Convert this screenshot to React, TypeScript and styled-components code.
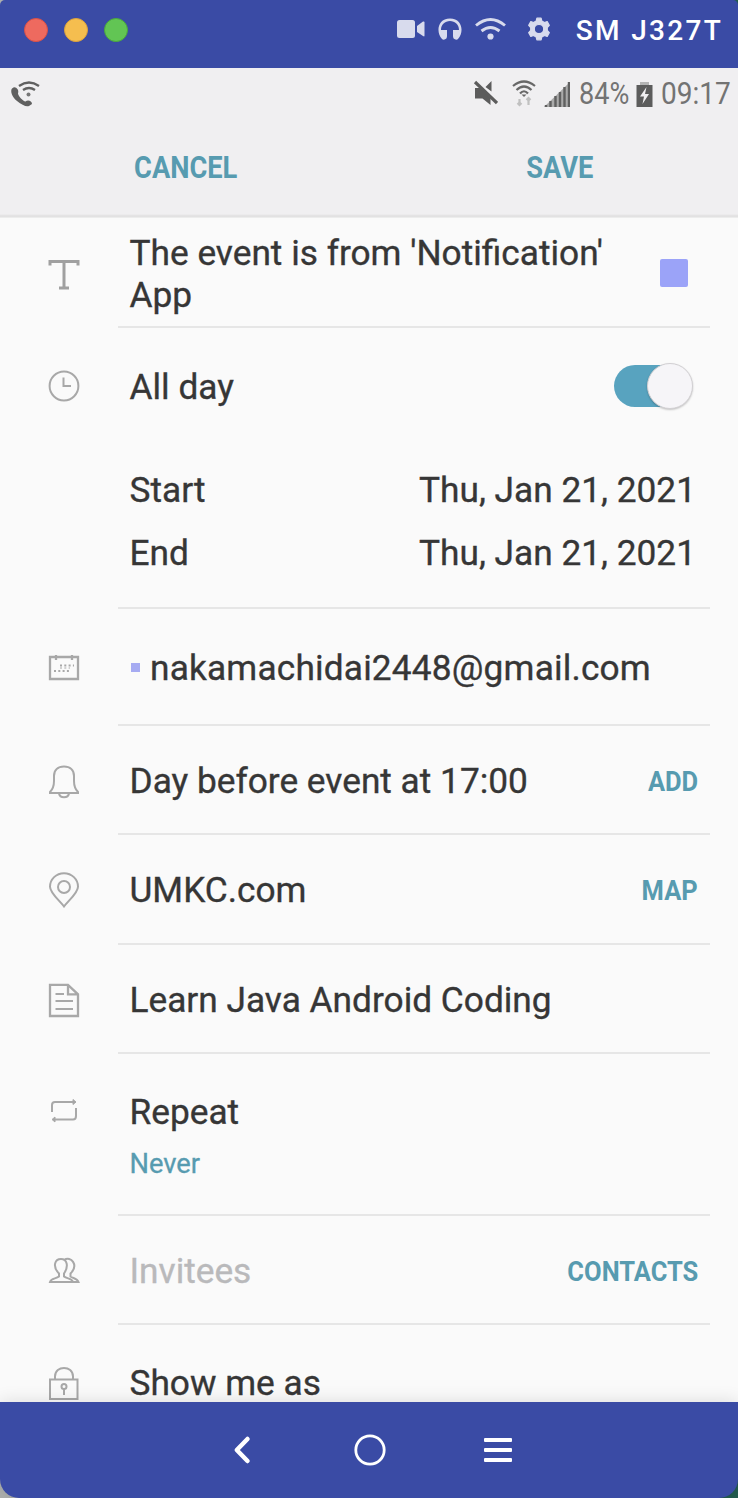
import React from "react";
import styled, { createGlobalStyle } from "styled-components";

const GlobalStyle = createGlobalStyle`
  *, *::before, *::after { box-sizing: border-box; }
  body { margin: 0; background: #a9aaa9; font-family: Roboto, "Liberation Sans", sans-serif; }
`;

const accent = "#579bb0";

const Frame = styled.div`
  width: 738px;
  height: 1498px;
  display: flex;
  flex-direction: column;
  overflow: hidden;
  background: linear-gradient(90deg, #aeb0ae 50%, #235c50 50%);
`;

const TitleBar = styled.header`
  height: 68px;
  flex: none;
  display: flex;
  align-items: center;
  padding: 0 15px 8px 24px;
  background: #3a4ba5;
  border-radius: 5px 5px 0 0;
`;

const Lights = styled.div`
  display: flex;
  gap: 16px;
  margin-right: auto;
`;

const Light = styled.span<{ $fill: string; $edge: string }>`
  width: 24px;
  height: 24px;
  border-radius: 50%;
  background: ${(p) => p.$fill};
  border: 1px solid ${(p) => p.$edge};
`;

const DeviceTools = styled.div`
  display: flex;
  align-items: center;
  margin-top: -2px;
  color: #d8dbed;
  svg { display: block; }
`;

const DeviceName = styled.span`
  font-size: 28px;
  font-weight: 500;
  line-height: 34px;
  letter-spacing: 2.3px;
  color: #fff;
  white-space: nowrap;
  margin: 2px 0 0 25px;
`;

const Screen = styled.main`
  flex: 1;
  min-height: 0;
  overflow: hidden;
  background: #fafafa;
`;

const StatusBar = styled.div`
  height: 51px;
  display: flex;
  align-items: center;
  padding: 0 7px 0 10px;
  background: #f0eff1;
  color: #666;
  svg { display: block; flex: none; }
`;

const StatusText = styled.span<{ $width: number; $scale: number }>`
  width: ${(p) => p.$width}px;
  margin-top: 1px;
  font-size: 31.5px;
  line-height: 36px;
  white-space: nowrap;
  color: #737373;
  transform: scaleX(${(p) => p.$scale});
  transform-origin: left center;
`;

const StatusRight = styled.div`
  display: flex;
  align-items: center;
  margin-left: auto;
`;

const ActionBar = styled.div`
  height: 99px;
  display: grid;
  grid-template-columns: 1fr 1fr;
  justify-items: center;
  padding: 31px 0 0 2px;
  background: linear-gradient(#f0eff1 95px, #e0dfe0 97px, #e4e4e4 98px, #f4f4f4 99px);
`;

const Action = styled.button<{ $small?: boolean; $shift?: number }>`
  border: 0;
  padding: 0;
  background: none;
  font: 700 ${(p) => (p.$small ? 28.5 : 31.5)}px/36px Roboto, sans-serif;
  height: 36px;
  color: ${accent};
  white-space: nowrap;
  transform: scaleX(${(p) => (p.$small ? 0.895 : 0.865)});
  transform-origin: ${(p) => (p.$small ? "right" : "center")} center;
  margin-left: ${(p) => p.$shift ?? 0}px;
  margin-top: ${(p) => (p.$small ? 4 : 0)}px;
`;

const Row = styled.section<{ $height: number }>`
  height: ${(p) => p.$height}px;
  display: grid;
  grid-template-columns: 118px 592px;
`;

const IconCell = styled.div<{ $top: number }>`
  padding: ${(p) => p.$top}px 0 0 46px;
  svg { display: block; }
`;

const Body = styled.div<{ $top: number }>`
  padding: ${(p) => p.$top}px 12px 0 11.5px;
  border-bottom: 2px solid #e6e6e6;
`;

const Line = styled.div`
  display: flex;
  justify-content: space-between;
  line-height: 42px;
  height: 42px;
`;

const Text = styled.span<{ $tone?: string; $track?: number }>`
  font-size: 35.25px;
  line-height: 42px;
  letter-spacing: ${(p) => p.$track ?? 0}px;
  white-space: nowrap;
  color: ${(p) => p.$tone ?? "#363636"};
  -webkit-text-stroke: 0.35px ${(p) => p.$tone ?? "#363636"};
`;

const Title = styled(Text)`
  white-space: pre-line;
`;

const Dates = styled.div`
  display: grid;
  gap: 21px;
  padding: 61px 2px 0 0;
`;

const SubText = styled.div`
  margin-top: 15px;
  font-size: 27.3px;
  line-height: 32px;
  color: ${accent};
  -webkit-text-stroke: 0.3px ${accent};
`;

const Swatch = styled.span`
  width: 28px;
  height: 28px;
  margin: 27px 10px 0 0;
  border-radius: 2px;
  background: #9ba3f8;
`;

const Account = styled.div`
  display: flex;
  align-items: center;
  gap: 10.5px;
  &::before {
    content: "";
    width: 9px;
    height: 9px;
    margin: -2px 0 0 1px;
    background: #a6abf2;
  }
`;

const Toggle = styled.span`
  width: 76px;
  height: 42px;
  margin: -1px 8px 0 0;
  display: flex;
  align-items: center;
  justify-content: flex-end;
  border-radius: 21px;
  background: #58a3bf;
`;

const Thumb = styled.span`
  width: 46px;
  height: 46px;
  flex: none;
  margin-right: -3px;
  border-radius: 50%;
  background: #f6f5f8;
  border: 1px solid #d2d0d3;
  box-shadow: 0 1px 2px rgba(0, 0, 0, 0.22);
`;

const NavBar = styled.nav`
  position: relative;
  height: 96px;
  flex: none;
  display: flex;
  justify-content: center;
  align-items: center;
  gap: 88px;
  background: #3a4ba5;
  border-radius: 0 0 19px 19px;
  box-shadow: 0 0 18px rgba(0, 0, 0, 0.13);
  svg { display: block; }
`;

const Outline = ({ children }: { children: React.ReactNode }) => (
  <svg width="36" height="36" viewBox="0 0 36 36" fill="none" stroke="#a8a8a8" strokeWidth="2">
    {children}
  </svg>
);

const icons = {
  title: (
    <path d="M4 8.5V4.500H32V8.5M18 4.500V31M13 31H23" strokeWidth="3" stroke="#a0a0a0" />
  ),
  clock: (
    <>
      <circle cx="18" cy="18" r="14.4" />
      <path d="M17.5 9.5V18H25" />
    </>
  ),
  calendar: (
    <>
      <path d="M4 7H32V29H4ZM10 5V10M26 5V10" strokeWidth="2.300" />
      <path d="M14 15.500H28M8 21H24" strokeDasharray="2 2.3" />
      <path d="M14 18H24" strokeDasharray="2 2.3" strokeWidth="1" />
    </>
  ),
  bell: (
    <path d="M4 28C7 25 8 21 8 17V12C8 6 12 2.5 18 2.5S28 6 28 12V17C28 21 29 25 32 28V29H4ZM13 29.5C14 34.5 22 34.5 23 29.5" />
  ),
  pin: (
    <>
      <path d="M18 34.5C14 29 4 21 4 14.7A14 13.5 0 0 1 32 14.7C32 21 22 29 18 34.5Z" />
      <circle cx="18" cy="15" r="6" />
    </>
  ),
  note: (
    <>
      <path d="M4 2.8H22L32 12.3V34H4ZM22 3V12.3H32" strokeWidth="2.300" />
      <path d="M9.5 12H18M9.5 19H27M9.5 27H27" />
    </>
  ),
  repeat: (
    <>
      <path d="M6 18V11Q6 8 9 8H27M30 14V22Q30 25.5 27 25.5H9" />
      <path d="M27 5.500L30 8L27 10.500ZM9 23L6 25.5L9 28Z" fill="#a5a5a5" strokeWidth="1" />
    </>
  ),
  people: (
    <>
      <path d="M4 29C5 25 10 26 13 23.5V20.5C6 13 9 6 15 6S23 13 18 20.5V23.5C21 26 26 25 27 29Z" />
      <path d="M18 7C25 2.5 33 12 24.5 20.5V23.5C27 25.5 31 25 32.5 29H27" />
    </>
  ),
  lock: (
    <>
      <path d="M4 14.5H31.5V34H4ZM9 14.5V11.5C9 0 27 0 27 11.5V14.5" />
      <circle cx="18" cy="21.5" r="2.5" />
      <path d="M18 24V30" />
    </>
  ),
};

type IconName = keyof typeof icons;

const Field = (p: {
  icon: IconName;
  height: number;
  iconTop: number;
  textTop: number;
  children: React.ReactNode;
}) => (
  <Row $height={p.height}>
    <IconCell $top={p.iconTop}>
      <Outline>{icons[p.icon]}</Outline>
    </IconCell>
    <Body $top={p.textTop}>{p.children}</Body>
  </Row>
);

const PhoneWifi = () => (
  <svg width="30" height="28" viewBox="0 0 30 28" fill="none" stroke="#606060" strokeWidth="2.3">
    <path
      d="M2 8.500C0 11 2 17 7 21S16 27 19 26L22 24C22 21 18 19.500 15.500 21.500C13 21 8.500 16.500 8 13.500C9.500 10 6 6.500 3.500 7.500Z"
      fill="#606060"
      stroke="none"
    />
    <path d="M9 6Q19 -1 29 6M13 10Q19 6 25 10" />
    <circle cx="18.500" cy="14.500" r="2" fill="#777" stroke="none" />
  </svg>
);

const Muted = () => (
  <svg width="25" height="27" viewBox="0 0 25 27" fill="#5c5c5c">
    <path d="M2 8H7L17.500 18V25L9.500 18.500H2ZM12.500 7L18.500 1V11.500Z" />
    <path d="M2 2L24 23" stroke="#5c5c5c" strokeWidth="3.200" />
  </svg>
);

const StatusWifi = () => (
  <svg width="24" height="27" viewBox="0 0 24 27" fill="none" stroke="#686868" strokeWidth="2.200">
    <path d="M1 6Q12 -3 23 6M4.500 10Q12 3 19.500 10M8 13.500Q12 9 16 13.500" />
    <path d="M9.500 14.500H14.500L12 17Z" fill="#686868" stroke="none" />
    <path d="M7.500 25V19M5.500 23L7.500 25L9.500 23M16.500 18V25M14.500 20L16.500 18L18.500 20" stroke="#c0c0c0" />
  </svg>
);

const Signal = () => (
  <svg width="26" height="26" viewBox="0 0 26 26">
    <path d="M0 26L26 1V26Z" fill="#aaa" />
    <path d="M2 26V24M6.500 26V20M11.500 26V15M16 26V11M20.500 26V6M25 26V1" stroke="#606060" strokeWidth="2.400" />
  </svg>
);

const Battery = () => (
  <svg width="17" height="26" viewBox="0 0 17 26">
    <path d="M4 1H13V5H4Z" fill="#b4b4b4" />
    <path d="M0.500 4H16.500V26H0.500Z" fill="#5c5c5c" />
    <path d="M10.500 6L4 15.500H8L6.500 23L13 13H9Z" fill="#f0eff1" />
  </svg>
);

const Camera = () => (
  <svg width="28" height="20" viewBox="0 0 28 20" fill="currentColor">
    <rect x="0" y="1" width="18" height="18" rx="2.500" />
    <path d="M20 7L26 2.500Q27.500 2 27.500 3.500V16.500Q27.500 18 26 17L20 13Z" />
  </svg>
);

const Headphones = () => (
  <svg width="24" height="22" viewBox="0 0 24 22" fill="currentColor">
    <path d="M4 21C-2 15 -1 0.500 12 0.500S26 15 20 21Q19 22 17.500 21.500Q15 21 15 18V12H21C21 6.500 17 3 12 3S3 6.500 3 12H9V18Q9 21 6.500 21.500Q5 22 4 21Z" />
  </svg>
);

const Wifi = () => (
  <svg width="31" height="22" viewBox="0 0 31 22" fill="none" stroke="currentColor" strokeWidth="2.900">
    <path d="M1 7.500Q15.500 -4.500 30 7.500M6.500 13Q15.500 6 24.500 13" />
    <circle cx="15.500" cy="18.500" r="3.100" fill="currentColor" stroke="none" />
  </svg>
);

const Gear = () => (
  <svg width="24" height="24" viewBox="0 0 24 24" fill="currentColor">
    <path
      fillRule="evenodd"
      stroke="currentColor"
      strokeWidth="1.200"
      strokeLinejoin="round"
      d="M9.900 1.200H14.100L14.800 4L17.500 5.500L20.200 4.600L22.300 8.400L20.300 10.500V13.500L22.300 15.600L20.200 19.400L17.500 18.500L14.800 20L14.100 22.800H9.900L9.200 20L6.500 18.500L3.800 19.400L1.700 15.600L3.700 13.500V10.500L1.700 8.400L3.800 4.600L6.500 5.500L9.200 4ZM12 7.300A4.700 4.700 0 1 0 12 16.700A4.700 4.700 0 1 0 12 7.300Z"
    />
  </svg>
);

const ToolGap = styled.span<{ $w: number }>`
  width: ${(p) => p.$w}px;
`;

export default function App() {
  return (
    <Frame>
      <GlobalStyle />
      <TitleBar>
        <Lights>
          <Light $fill="#ee6a5f" $edge="#dc5145" />
          <Light $fill="#f5be4f" $edge="#dda23b" />
          <Light $fill="#62c554" $edge="#4aa93b" />
        </Lights>
        <DeviceTools>
          <Camera />
          <ToolGap $w={13} />
          <Headphones />
          <ToolGap $w={13} />
          <Wifi />
          <ToolGap $w={21} />
          <Gear />
        </DeviceTools>
        <DeviceName>SM J327T</DeviceName>
      </TitleBar>

      <Screen>
        <StatusBar>
          <PhoneWifi />
          <StatusRight>
            <Muted />
            <ToolGap $w={14} />
            <StatusWifi />
            <ToolGap $w={8} />
            <Signal />
            <ToolGap $w={9} />
            <StatusText $width={57} $scale={0.86}>84%</StatusText>
            <Battery />
            <ToolGap $w={8} />
            <StatusText $width={70} $scale={0.89}>09:17</StatusText>
          </StatusRight>
        </StatusBar>
        <ActionBar>
          <Action>CANCEL</Action>
          <Action $shift={12}>SAVE</Action>
        </ActionBar>

        <Field icon="title" height={110} iconTop={39} textTop={14}>
          <Line>
            <Title>{"The event is from 'Notification'\nApp"}</Title>
            <Swatch />
          </Line>
        </Field>

        <Field icon="clock" height={281} iconTop={40} textTop={38}>
          <Line>
            <Text>All day</Text>
            <Toggle>
              <Thumb />
            </Toggle>
          </Line>
          <Dates>
            <Line>
              <Text>Start</Text>
              <Text>Thu, Jan 21, 2021</Text>
            </Line>
            <Line>
              <Text>End</Text>
              <Text>Thu, Jan 21, 2021</Text>
            </Line>
          </Dates>
        </Field>

        <Field icon="calendar" height={117} iconTop={41} textTop={38}>
          <Account>
            <Text $track={0.17}>nakamachidai2448@gmail.com</Text>
          </Account>
        </Field>

        <Field icon="bell" height={109} iconTop={38} textTop={34}>
          <Line>
            <Text>Day before event at 17:00</Text>
            <Action $small>ADD</Action>
          </Line>
        </Field>

        <Field icon="pin" height={110} iconTop={37} textTop={34}>
          <Line>
            <Text>UMKC.com</Text>
            <Action $small>MAP</Action>
          </Line>
        </Field>

        <Field icon="note" height={109} iconTop={37} textTop={34}>
          <Text>Learn Java Android Coding</Text>
        </Field>

        <Field icon="repeat" height={162} iconTop={40} textTop={37}>
          <Line>
            <Text>Repeat</Text>
          </Line>
          <SubText>Never</SubText>
        </Field>

        <Field icon="people" height={109} iconTop={37} textTop={34}>
          <Line>
            <Text $tone="#b9b9bb">Invitees</Text>
            <Action $small>CONTACTS</Action>
          </Line>
        </Field>

        <Field icon="lock" height={109} iconTop={40} textTop={37}>
          <Text>Show me as</Text>
        </Field>
      </Screen>

      <NavBar>
        <svg width="40" height="40" viewBox="0 0 40 40" fill="none" stroke="#fff" strokeWidth="4.500" strokeLinecap="round" strokeLinejoin="round">
          <path d="M26.500 9L15.800 20L26.500 31" />
        </svg>
        <svg width="40" height="40" viewBox="0 0 40 40" fill="none" stroke="#fff" strokeWidth="2.800">
          <circle cx="21" cy="20" r="14.200" />
        </svg>
        <svg width="40" height="40" viewBox="0 0 40 40" fill="#fff">
          <rect x="7" y="8" width="28" height="4" rx="1" />
          <rect x="7" y="18" width="28" height="4" rx="1" />
          <rect x="7" y="28" width="28" height="4" rx="1" />
        </svg>
      </NavBar>
    </Frame>
  );
}
